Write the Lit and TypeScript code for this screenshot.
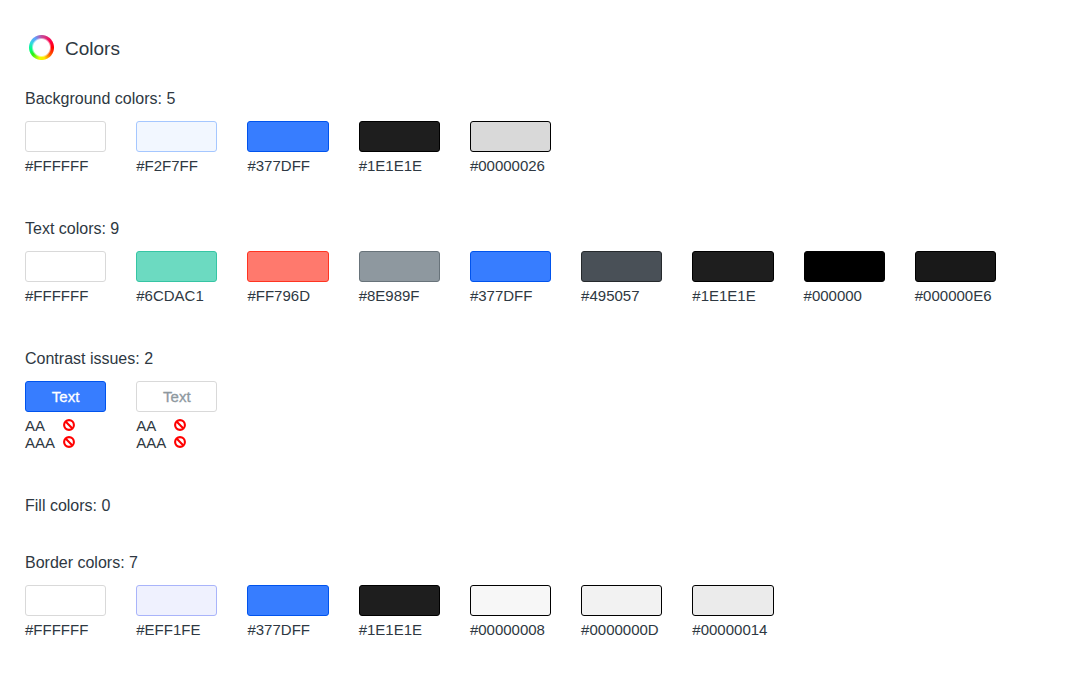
import { LitElement, html, css } from "lit";
import { customElement } from "lit/decorators.js";
import { styleMap } from "lit/directives/style-map.js";

interface Swatch {
  fill: string;
  border: string;
  label: string;
}

interface ColorGroup {
  title: string;
  swatches: Swatch[];
}

const sw = (label: string, border: string, fill = label): Swatch => ({ label, border, fill });

const background: ColorGroup = {
  title: "Background colors",
  swatches: [
    sw("#FFFFFF", "#d9d9d9"),
    sw("#F2F7FF", "#a5c7ff"),
    sw("#377DFF", "#0053ed"),
    sw("#1E1E1E", "#000000"),
    sw("#00000026", "#000000"),
  ],
};

const text: ColorGroup = {
  title: "Text colors",
  swatches: [
    sw("#FFFFFF", "#d9d9d9"),
    sw("#6CDAC1", "#36c5a4"),
    sw("#FF796D", "#ff3421"),
    sw("#8E989F", "#68737a"),
    sw("#377DFF", "#0053ed"),
    sw("#495057", "#262a2d"),
    sw("#1E1E1E", "#000000"),
    sw("#000000", "#000000"),
    sw("#000000E6", "#000000"),
  ],
};

const fill: ColorGroup = { title: "Fill colors", swatches: [] };

const border: ColorGroup = {
  title: "Border colors",
  swatches: [
    sw("#FFFFFF", "#d9d9d9"),
    sw("#EFF1FE", "#a9b4fa"),
    sw("#377DFF", "#0053ed"),
    sw("#1E1E1E", "#000000"),
    sw("#00000008", "#000000"),
    sw("#0000000D", "#000000"),
    sw("#00000014", "#000000"),
  ],
};

const contrast = [
  { color: "#ffffff", fill: "#377dff", border: "#0053ed" },
  { color: "#8e989f", fill: "#ffffff", border: "#d9d9d9" },
];

@customElement("app-root")
export class AppRoot extends LitElement {
  static styles = css`
    :host {
      display: block;
      box-sizing: border-box;
      padding: 34px 89px 9px 25px;
      background: #ffffff;
      color: #2e3842;
      font-family: "Helvetica Neue", "Liberation Sans", Arial, sans-serif;
      font-size: 15px;
      line-height: 17px;
    }
    .header {
      display: flex;
      align-items: flex-start;
      gap: 10px;
      padding-left: 3px;
      margin-bottom: 24px;
    }
    .wheel {
      width: 27px;
      height: 27px;
      border-radius: 50%;
      background: conic-gradient(
        #c050a0 0deg,
        #ff0048 55deg,
        #ff0000 90deg,
        #ff5a00 130deg,
        #ffe600 165deg,
        #e8ff00 190deg,
        #30f010 230deg,
        #00ff80 260deg,
        #30d8e0 295deg,
        #60a0ff 325deg,
        #c050a0 360deg
      );
      mask: radial-gradient(circle, transparent 8px, #000 10px, #000 12px, transparent 13px);
    }
    h1,
    h2 {
      margin: 0;
      font-weight: 400;
    }
    h1 {
      font-size: 19px;
      line-height: 30px;
    }
    h2 {
      font-size: 16px;
      line-height: 22px;
    }
    section {
      margin-bottom: 35px;
    }
    .row {
      display: grid;
      grid-template-columns: repeat(9, minmax(0, 1fr));
      column-gap: 30px;
      margin: 0;
      padding: 0;
      list-style: none;
    }
    .item {
      padding: 11px 0 9px;
    }
    .chip {
      box-sizing: border-box;
      height: 31px;
      margin-bottom: 5px;
      border: 1px solid;
      border-radius: 3px;
      text-align: center;
      line-height: 30px;
      -webkit-text-stroke: 0.3px currentColor;
    }
    .level {
      display: grid;
      grid-template-columns: 30px 12px;
      column-gap: 8px;
      align-items: start;
    }
    .fail {
      display: block;
      width: 12px;
      height: 16px;
    }
  `;

  private renderGroup(group: ColorGroup) {
    return html`
      <section>
        <h2>${group.title}: ${group.swatches.length}</h2>
        <ul class="row">
          ${group.swatches.map(
            (s) => html`<li class="item">
              <div class="chip" style=${styleMap({ backgroundColor: s.fill, borderColor: s.border })}></div>
              ${s.label}
            </li>`
          )}
        </ul>
      </section>
    `;
  }

  private renderLevel(name: string) {
    return html`<div class="level">
      <span>${name}</span>
      <svg class="fail" viewBox="0 0 12 12" role="img" aria-label="Fail">
        <circle cx="6" cy="6" r="4.9" fill="none" stroke="#ff0000" stroke-width="2.1" />
        <path d="M2.6 2.6 9.4 9.4" stroke="#ff0000" stroke-width="2.1" />
      </svg>
    </div>`;
  }

  render() {
    return html`
      <header class="header">
        <div class="wheel"></div>
        <h1>Colors</h1>
      </header>
      <main>
        ${this.renderGroup(background)} ${this.renderGroup(text)}
        <section>
          <h2>Contrast issues: ${contrast.length}</h2>
          <ul class="row">
            ${contrast.map(
              (c) => html`<li class="item">
                <div
                  class="chip"
                  style=${styleMap({ color: c.color, backgroundColor: c.fill, borderColor: c.border })}
                >
                  Text
                </div>
                ${this.renderLevel("AA")} ${this.renderLevel("AAA")}
              </li>`
            )}
          </ul>
        </section>
        ${this.renderGroup(fill)} ${this.renderGroup(border)}
      </main>
    `;
  }
}
